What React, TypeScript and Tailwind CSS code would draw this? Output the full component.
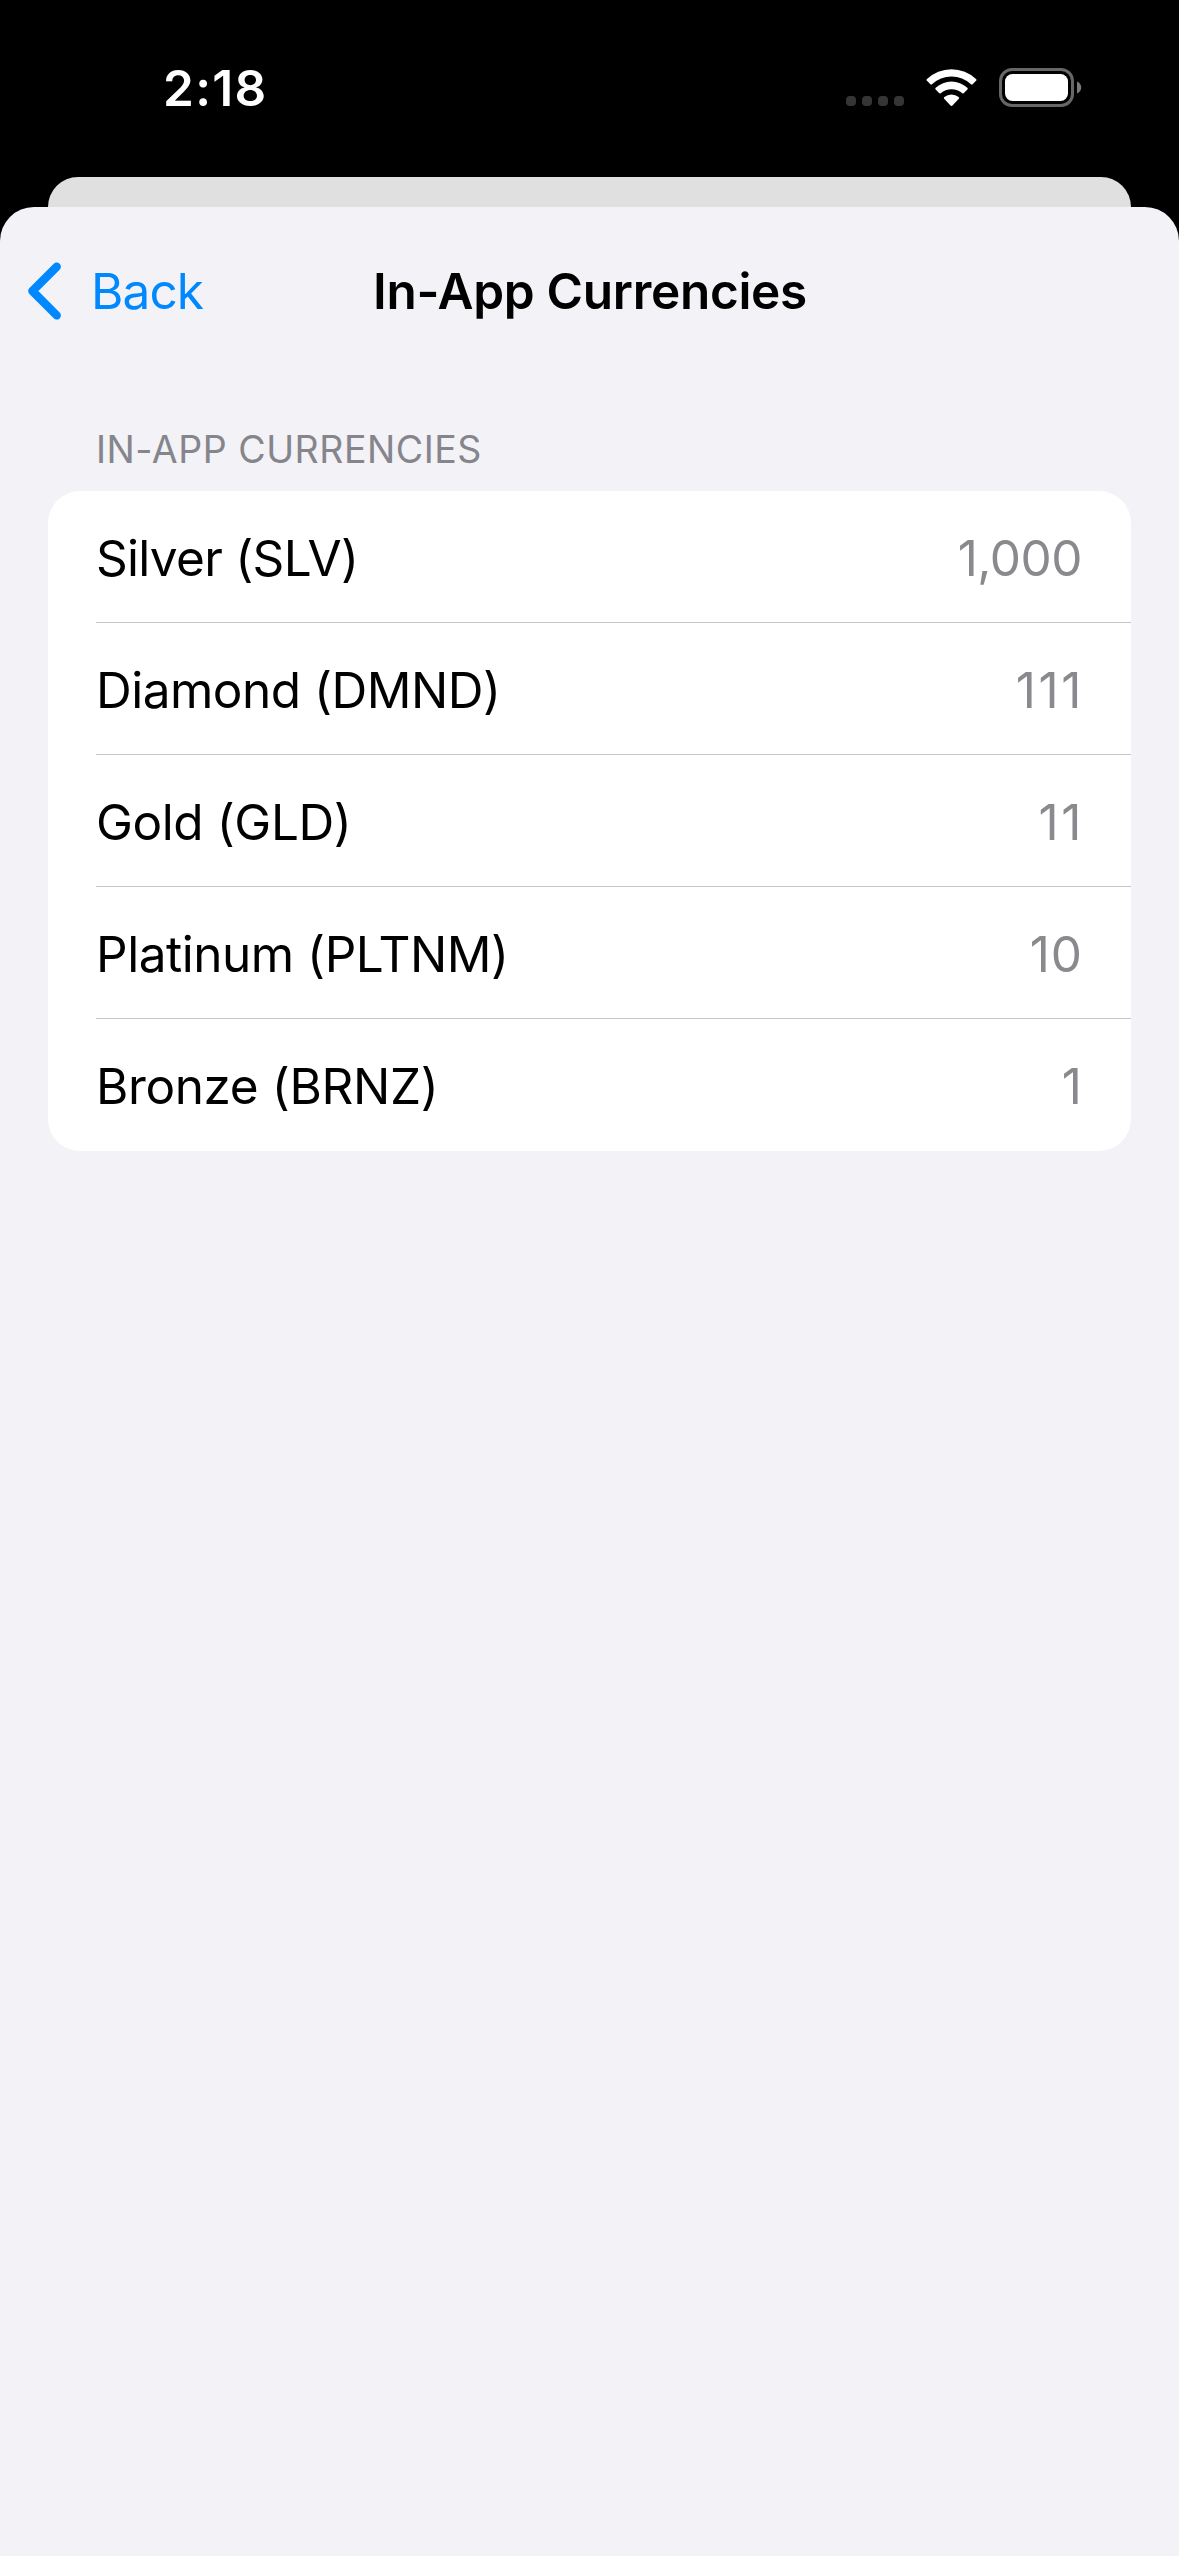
type Currency = {
  name: string;
  amount: string;
  nameClass: string;
  amountClass: string;
};

const currencies: Currency[] = [
  { name: "Silver (SLV)", amount: "1,000", nameClass: "tracking-[-0.71px]", amountClass: "tracking-[-0.5px]" },
  { name: "Diamond (DMND)", amount: "111", nameClass: "tracking-[-0.5px]", amountClass: "tracking-[2.6px] -mr-[2px]" },
  { name: "Gold (GLD)", amount: "11", nameClass: "tracking-[-0.42px]", amountClass: "tracking-[2.6px] -mr-[2px]" },
  { name: "Platinum (PLTNM)", amount: "10", nameClass: "tracking-[-0.48px]", amountClass: "tracking-[0.9px] -mr-px" },
  { name: "Bronze (BRNZ)", amount: "1", nameClass: "tracking-[-0.38px]", amountClass: "" },
];

function CellularDots() {
  return (
    <div className="mt-[27px] flex gap-[6px]">
      <span className="size-[10px] rounded-[4px] bg-[#353535]" />
      <span className="size-[10px] rounded-[4px] bg-[#353535]" />
      <span className="size-[10px] rounded-[4px] bg-[#353535]" />
      <span className="size-[10px] rounded-[4px] bg-[#353535]" />
    </div>
  );
}

function WifiIcon() {
  return (
    <svg width="51" height="38" viewBox="0 0 153 114" fill="white" className="ml-[22px]">
      <path d="M3 30Q0 33 3 35.500L13 45.500Q15.500 48 18 46A85 85 0 0 1 135 46Q137.500 48 140 45.500L150 35.500Q153 33 150 30A106 106 0 0 0 3 30Z" />
      <path d="M29 56Q26 59 29 61.500L39 72Q41.500 74.500 44 72.500A50 50 0 0 1 109 72.500Q111.500 74.500 114 72L124 61.500Q127 59 124 56A71 71 0 0 0 29 56Z" />
      <path d="M55 84Q52 86.500 54.500 89L73.500 109.500Q76.500 112 79.500 109.500L98.500 89Q101 86.500 98 84A34 34 0 0 0 55 84Z" />
    </svg>
  );
}

function BatteryIcon() {
  return (
    <svg width="83" height="39" viewBox="0 0 83 39" className="ml-[22px]">
      <rect x="1.500" y="1.500" width="72" height="36" rx="11.500" fill="none" stroke="#676767" strokeWidth="3" />
      <rect x="6" y="6" width="63" height="27" rx="7.500" fill="white" />
      <path d="M78 13.500C80.700 14.600 82.200 16.900 82.200 19.500C82.200 22.100 80.700 24.400 78 25.500Z" fill="#7a7a7a" />
    </svg>
  );
}

function StatusBar() {
  return (
    <header className="flex h-[177px] items-center pl-[163px] text-white">
      <span className="text-[49.5px] leading-none font-semibold tracking-[1.32px]">2:18</span>
      <div className="mr-[97px] mb-[2px] ml-auto flex items-center">
        <CellularDots />
        <WifiIcon />
        <BatteryIcon />
      </div>
    </header>
  );
}

function NavigationBar() {
  return (
    <nav className="grid h-[168px] grid-cols-[1fr_auto_1fr] items-center text-[49.5px] leading-none">
      <button className="flex items-center pl-[27px] text-[#0088ff]">
        <svg width="36" height="60" viewBox="0 0 36 60" fill="none" stroke="currentColor" strokeWidth="8.400" strokeLinecap="round" strokeLinejoin="round">
          <path d="M29.700 5.800L5.400 30L29.700 54.400" />
        </svg>
        <span className="mt-[2px] ml-[28px] tracking-[-0.9px]">Back</span>
      </button>
      <h1 className="mt-[2px] pl-px font-semibold tracking-[-0.29px] text-black">In-App Currencies</h1>
      <span />
    </nav>
  );
}

export default function App() {
  return (
    <div className="flex h-[2556px] w-[1179px] flex-col overflow-hidden bg-black font-['Inter',sans-serif]">
      <StatusBar />
      <div className="mx-12 h-[30px] rounded-t-[32px] bg-[#e0e0e0]" />
      <main className="flex-1 rounded-t-[34px] bg-[#f2f2f7]">
        <NavigationBar />
        <h2 className="pt-[51px] pb-[17px] pl-[96px] text-[37.5px] leading-[48px] tracking-[0.52px] text-[#85858b]">
          IN-APP CURRENCIES
        </h2>
        <ul className="mx-12 overflow-hidden rounded-[32px] bg-white pl-12">
          {currencies.map((c) => (
            <li
              key={c.name}
              className="flex h-[132px] items-center justify-between border-b border-[#c6c6c8] pt-[5px] pr-[49px] text-[49.5px] leading-none last:border-b-0 last:pt-[3px]"
            >
              <span className={c.nameClass}>{c.name}</span>
              <span className={`text-[#8a8a8e] ${c.amountClass}`}>{c.amount}</span>
            </li>
          ))}
        </ul>
      </main>
    </div>
  );
}
